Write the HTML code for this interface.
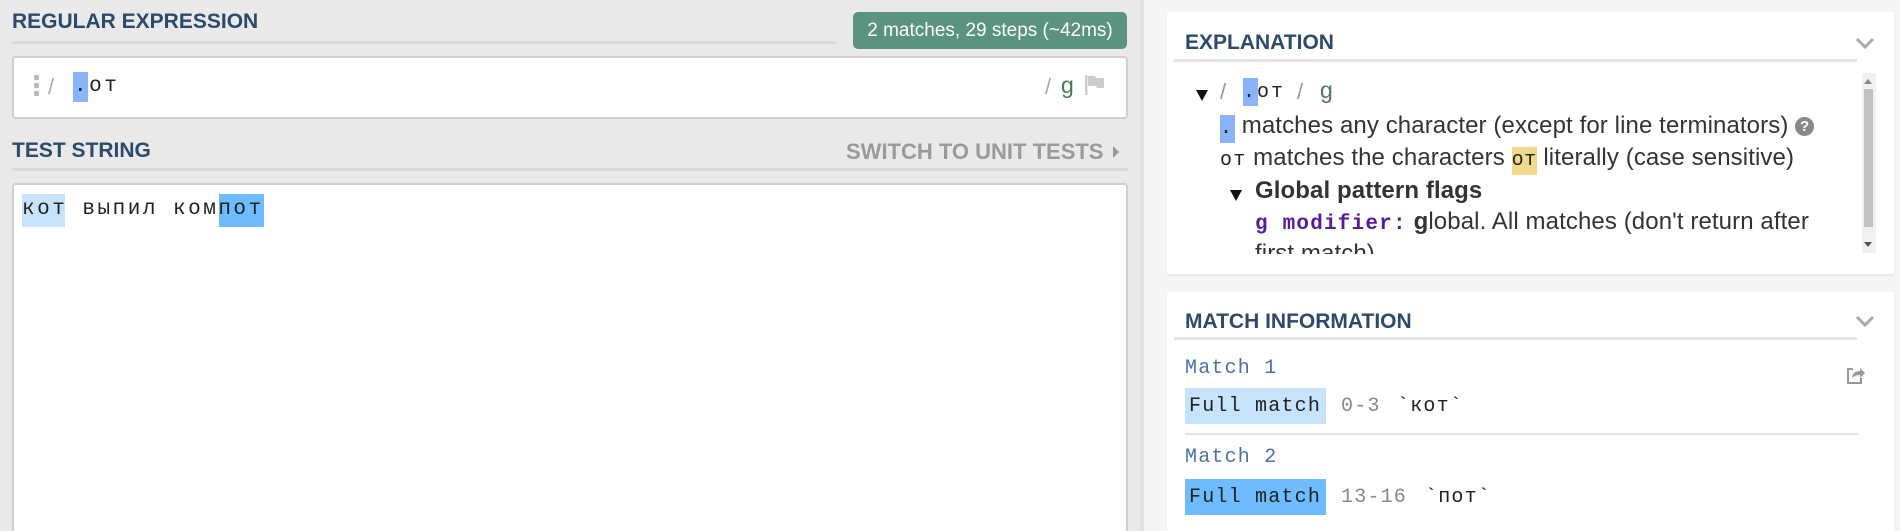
<!DOCTYPE html>
<html><head><meta charset="utf-8"><style>
*{margin:0;padding:0;box-sizing:border-box}
html,body{width:1900px;height:531px;overflow:hidden}
body{background:#f5f5f5;font-family:"Liberation Sans",sans-serif;position:relative}
.a{position:absolute;white-space:nowrap}
.left{position:absolute;left:0;top:0;width:1144px;height:531px;background:#e9e9e9;border-right:4px solid #e0e0e0}
.hd{font-family:"Liberation Sans Narrow","Liberation Sans",sans-serif;font-stretch:condensed;font-weight:bold;color:#2e4a6a;font-size:21px}
.mono{font-family:"Liberation Mono","DejaVu Sans Mono",monospace}
.card{position:absolute;background:#fff;box-shadow:0 1px 2px rgba(0,0,0,.08)}
.ln{position:absolute;height:3px;background:#e4e4e4}
.tx{font-size:24px;color:#333;letter-spacing:0.1px}
.m{font-family:"Liberation Mono","DejaVu Sans Mono",monospace;font-size:20px;letter-spacing:1.2px}
.hl{display:inline-block;line-height:28px}
</style></head><body>
<div class="left"></div>
<div class="a hd" style="left:12px;top:10px">REGULAR EXPRESSION</div>
<div class="ln" style="left:12px;top:41px;width:824px;background:#dadada"></div>
<div class="a" style="left:853px;top:12px;width:274px;height:37px;background:#5a9480;border-radius:5px;color:#fff;font-family:'Liberation Sans Narrow','Liberation Sans',sans-serif;font-stretch:condensed;font-size:19px;line-height:37px;text-align:center">2 matches, 29 steps (~42ms)</div>
<div class="a" style="left:12px;top:56px;width:1116px;height:63px;background:#fff;border:2px solid #cfcfcf;border-radius:4px"></div>
<div class="a" style="left:34px;top:75px;width:5px;height:5px;background:#bbb;box-shadow:0 8px 0 #bbb,0 16px 0 #bbb;border-radius:1px"></div>
<div class="a" style="left:48px;top:74px;font-size:22px;color:#aaa">/</div>
<div class="a" style="left:73px;top:72px;width:15px;height:30px;background:#8ab4f8"></div>
<div class="a mono" style="left:74px;top:75px;font-size:21px;color:#222;letter-spacing:2.5px">.от</div>
<div class="a" style="left:1045px;top:74px;font-size:22px;color:#aaa">/</div>
<div class="a" style="left:1061px;top:72px;font-size:23px;color:#4a7a5a">g</div>
<svg class="a" style="left:1084px;top:74px" width="22" height="22" viewBox="0 0 22 22"><rect x="1" y="1" width="2.5" height="20" fill="#ccc"/><path d="M4 2h7l1 2h8v10h-7l-1-2H4z" fill="#ccc"/></svg>
<div class="a hd" style="left:12px;top:139px">TEST STRING</div>
<div class="a hd" style="left:846px;top:139px;color:#9a9a9a;font-weight:bold;font-size:22px">SWITCH TO UNIT TESTS</div>
<div class="a" style="left:1113px;top:146px;border-left:6px solid #999;border-top:6px solid transparent;border-bottom:6px solid transparent"></div>
<div class="ln" style="left:12px;top:168px;width:1116px;background:#dadada"></div>
<div class="a" style="left:12px;top:183px;width:1116px;height:360px;background:#fff;border:2px solid #cfcfcf;border-radius:4px"></div>
<div class="a" style="left:22px;top:194px;width:43px;height:33px;background:#c7e3fc"></div>
<div class="a" style="left:219px;top:194px;width:45px;height:33px;background:#6ebcff"></div>
<div class="a mono" style="left:22px;top:198px;font-size:21px;color:#222;letter-spacing:2.5px">кот выпил компот</div>

<div class="card" style="left:1167px;top:12px;width:727px;height:262px"></div>
<div class="a hd" style="left:1185px;top:31px">EXPLANATION</div>
<svg class="a" style="left:1855px;top:36px" width="20" height="14"><path d="M2 3l8 8 8-8" stroke="#aaa" stroke-width="3" fill="none"/></svg>
<div class="ln" style="left:1174px;top:59px;width:683px"></div>
<div class="a" style="left:1862px;top:73px;width:14px;height:180px;background:#f0f0f0"></div>
<div class="a" style="left:1864px;top:89px;width:9px;height:138px;background:#c1c1c1"></div>
<div class="a" style="left:1864px;top:79px;border-bottom:5px solid #888;border-left:4px solid transparent;border-right:4px solid transparent"></div>
<div class="a" style="left:1864px;top:242px;border-top:5px solid #555;border-left:4px solid transparent;border-right:4px solid transparent"></div>
<div class="a" style="left:1196px;top:90px;border-top:11px solid #111;border-left:6px solid transparent;border-right:6px solid transparent"></div>
<div class="a" style="left:1220px;top:79px;font-size:22px;color:#999">/</div>
<div class="a" style="left:1243px;top:78px;width:15px;height:28px;background:#8ab4f8"></div>
<div class="a mono" style="left:1243px;top:81px;font-size:20px;color:#222;letter-spacing:2px">.от</div>
<div class="a" style="left:1297px;top:79px;font-size:22px;color:#999">/</div>
<div class="a" style="left:1320px;top:77px;font-size:23px;color:#4a7a5a">g</div>

<div class="a tx" style="left:1220px;top:110px;line-height:31px"><span class="hl m" style="background:#8ab4f8;width:15px;color:#222">.</span> matches any character (except for line terminators) <span style="display:inline-block;width:19px;height:19px;border-radius:50%;background:#888;color:#fff;font-size:15px;font-weight:bold;text-align:center;line-height:19px;vertical-align:2px">?</span></div>
<div class="a tx" style="left:1220px;top:142px;line-height:31px"><span class="m" style="color:#222">от</span> matches the characters <span class="hl m" style="background:#f0d98a;color:#222;letter-spacing:0.5px">от</span> literally (case sensitive)</div>
<div class="a" style="left:1230px;top:190px;border-top:11px solid #111;border-left:6px solid transparent;border-right:6px solid transparent"></div>
<div class="a tx" style="left:1255px;top:177px;font-weight:bold">Global pattern flags</div>
<div class="a tx" style="left:1255px;top:208px"><span class="m" style="color:#5a1a9a;font-weight:bold;font-size:21px">g modifier:</span> <b>g</b>lobal. All matches (don't return after</div>
<div style="position:absolute;left:1255px;top:232px;width:600px;height:22px;overflow:hidden"><div class="tx" style="position:absolute;top:8px;white-space:nowrap">first match)</div></div>

<div class="card" style="left:1167px;top:292px;width:727px;height:239px"></div>
<div class="a hd" style="left:1185px;top:310px">MATCH INFORMATION</div>
<svg class="a" style="left:1855px;top:314px" width="20" height="14"><path d="M2 3l8 8 8-8" stroke="#aaa" stroke-width="3" fill="none"/></svg>
<div class="ln" style="left:1174px;top:337px;width:683px"></div>
<div class="a m" style="left:1185px;top:357px;color:#4a72a8">Match 1</div>
<svg class="a" style="left:1844px;top:364px" width="22" height="22" viewBox="0 0 22 22"><path d="M9 5H4v14h13v-5" stroke="#999" stroke-width="2" fill="none"/><path d="M8 14c0-5 4-7 8-7V4l5 5-5 5v-3c-3 0-6 1-8 3z" fill="#999"/></svg>
<div class="a" style="left:1185px;top:388px;width:141px;height:36px;background:#c7e3fc"></div>
<div class="a m" style="left:1189px;top:395px;color:#222">Full match</div>
<div class="a m" style="left:1341px;top:395px;color:#888">0-3</div>
<div class="a m" style="left:1397px;top:395px;color:#222">`кот`</div>
<div class="ln" style="left:1185px;top:433px;width:673px;height:2px"></div>
<div class="a m" style="left:1185px;top:446px;color:#4a72a8">Match 2</div>
<div class="a" style="left:1185px;top:479px;width:141px;height:36px;background:#6ebcff"></div>
<div class="a m" style="left:1189px;top:486px;color:#222">Full match</div>
<div class="a m" style="left:1341px;top:486px;color:#888">13-16</div>
<div class="a m" style="left:1425px;top:486px;color:#222">`пот`</div>
</body></html>
